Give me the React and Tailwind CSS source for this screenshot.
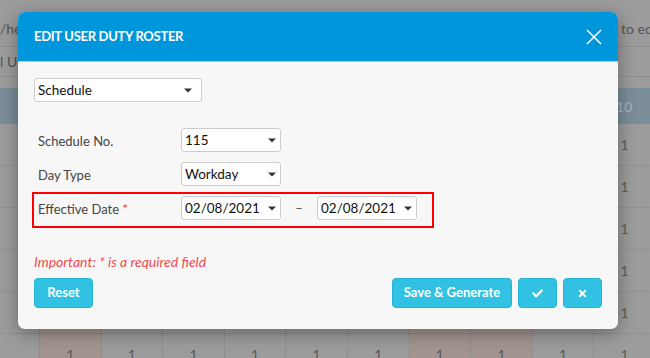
import React from 'react';
import { FaCheck, FaTimes } from 'react-icons/fa';

const columns = Array.from({ length: 10 }, (_, i) => i + 1);
const rows = [0, 1, 2, 3, 4, 5];
const shaded = [1, 7, 8];

function Caret() {
  return (
    <svg width="8" height="5" viewBox="0 0 8 5" className="shrink-0">
      <path d="M0 0.5h8L4 4.5z" fill="#333" />
    </svg>
  );
}

function Select({ value, className = '' }) {
  return (
    <div
      className={`flex h-[24px] items-center justify-between rounded-[3px] border border-[#cccccc] bg-white pl-[3px] pr-[4px] text-[13.5px] text-[#111] ${className}`}
    >
      <span>{value}</span>
      <Caret />
    </div>
  );
}

function FormRow({ label, required, children, highlight }) {
  return (
    <div
      className={`flex h-[32px] w-[398px] items-start pt-[2px] pl-[4px] ${highlight ? 'outline-2 outline-[#ff0000]' : ''}`}
    >
      <div className="w-[143px] shrink-0 pt-[4px] text-[13px] text-[#444]">
        {label}
        {required && <span className="text-[#ff3333]"> *</span>}
      </div>
      {children}
    </div>
  );
}

export default function App() {
  return (
    <div className="relative h-[358px] w-[650px] overflow-hidden bg-[#9c9c9c] font-['Lato','Liberation_Sans',sans-serif] text-[#4a4a4a]">
      {/* Page behind the dialog */}
      <div className="flex h-[47px] items-end border-b border-[#8e8e8e] pb-[7px] text-[14px] whitespace-nowrap">
        <span className="w-[621px] shrink-0 overflow-hidden text-[#555]">/help</span>
        <span className="text-[#555]">to edit</span>
      </div>
      <div className="flex h-[30px] items-center border-b border-[#8e8e8e] text-[14px] text-[#555]">
        <span>l Users</span>
      </div>
      <div className="mt-[11px] grid grid-cols-[39px_repeat(10,61.6px)]">
        <div className="h-[36px] bg-[#7a8d98]" />
        {columns.map((c) => (
          <div key={c} className="flex h-[36px] items-center justify-center bg-[#7a8d98] text-[14px] text-[#a9b6bd]">
            {c}
          </div>
        ))}
        {rows.map((r) => (
          <React.Fragment key={r}>
            <div className="h-[42px] border-b border-dotted border-[#858585]" />
            {columns.map((c) => (
              <div
                key={c}
                className={`flex h-[42px] items-center justify-center border-b border-l border-dotted border-[#858585] text-[14px] text-[#5a5a5a] ${shaded.includes(c) ? 'bg-[#a29590]' : ''}`}
              >
                1
              </div>
            ))}
          </React.Fragment>
        ))}
      </div>

      {/* Dialog */}
      <div className="absolute top-[12px] left-[18px] w-[600px] rounded-[7px] bg-[#f7f7f7] shadow-[0_4px_18px_rgba(0,0,0,0.35)]">
        <div className="flex h-[50px] items-center justify-between rounded-t-[7px] border-b border-[#c4c4c4] bg-[#0096db] pr-[16px] pl-[16px]">
          <h2 className="text-[13px] font-bold tracking-[-0.3px] text-white">EDIT USER DUTY ROSTER</h2>
          <svg width="16" height="16" viewBox="0 0 16 16">
            <path d="M1 1L15 15M15 1L1 15" stroke="white" strokeWidth="1.5" />
          </svg>
        </div>

        <div className="px-[16px] pt-[16px] pb-[21px]">
          <Select value="Schedule" className="w-[168px] pr-[9px]" />

          <div className="mt-[24px] flex flex-col gap-[2px]">
            <FormRow label="Schedule No.">
              <Select value="115" className="w-[100px]" />
            </FormRow>
            <FormRow label="Day Type">
              <Select value="Workday" className="w-[100px]" />
            </FormRow>
            <FormRow label="Effective Date" required highlight>
              <Select value="02/08/2021" className="w-[100px]" />
              <span className="w-[36px] pt-[3px] text-center text-[13px] text-[#555]">–</span>
              <Select value="02/08/2021" className="w-[100px]" />
            </FormRow>
          </div>

          <p className="mt-[27px] text-[14px] leading-[18px] text-[#f04a50] italic">Important: * is a required field</p>

          <div className="mt-[7px] flex items-center">
            <button className="h-[30px] w-[59px] rounded-[4px] border border-[#26b3d6] bg-[#31c1e3] text-[13px] font-bold text-white">
              Reset
            </button>
            <div className="ml-auto flex gap-[6px]">
              <button className="h-[30px] w-[120px] rounded-[4px] border border-[#26b3d6] bg-[#31c1e3] text-[13px] font-bold text-white">
                Save &amp; Generate
              </button>
              <button className="flex h-[30px] w-[39px] items-center justify-center rounded-[4px] border border-[#26b3d6] bg-[#31c1e3] text-white">
                <FaCheck size={11} />
              </button>
              <button className="flex h-[30px] w-[39px] items-center justify-center rounded-[4px] border border-[#26b3d6] bg-[#31c1e3] text-white">
                <FaTimes size={11} />
              </button>
            </div>
          </div>
        </div>
      </div>
    </div>
  );
}
